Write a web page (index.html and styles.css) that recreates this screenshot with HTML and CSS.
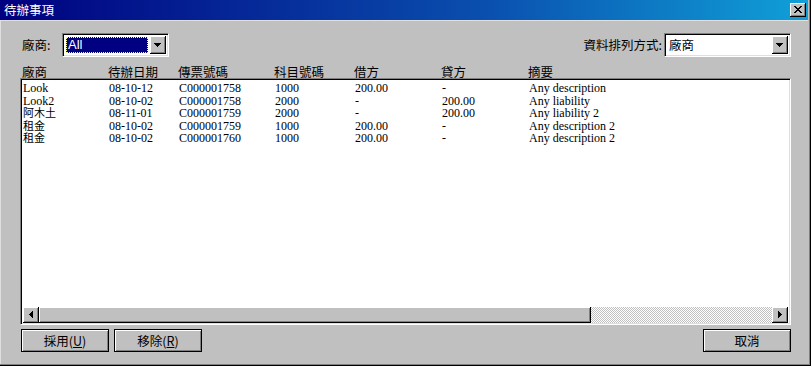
FILE: index.html
```html
<!DOCTYPE html>
<html>
<head>
<meta charset="utf-8">
<link rel="stylesheet" href="styles.css">
</head>
<body>
<div class="window">
  <div class="titlebar">
    <span class="title">待辦事項</span>
    <div class="close">
      <svg width="8" height="7" viewBox="0 0 8 7"><path d="M0 0h2v1H0zM6 0h2v1H6zM1 1h2v1H1zM5 1h2v1H5zM2 2h4v1H2zM3 3h2v1H3zM2 4h4v1H2zM1 5h2v1H1zM5 5h2v1H5zM0 6h2v1H0zM6 6h2v1H6z" fill="#000"/></svg>
    </div>
  </div>
  <div class="body">
    <div class="filters">
      <div class="field-group">
        <span class="label label-vendor">廠商:</span>
        <div class="combo combo-vendor">
          <div class="combo-value"><span class="selected">All</span></div>
          <div class="combo-btn"><svg width="7" height="4" viewBox="0 0 7 4"><path d="M0 0h7v1H0zM1 1h5v1H1zM2 2h3v1H2zM3 3h1v1H3z" fill="#000"/></svg></div>
        </div>
      </div>
      <div class="field-group">
        <span class="label">資料排列方式:</span>
        <div class="combo combo-sort">
          <div class="combo-value"><span class="plain">廠商</span></div>
          <div class="combo-btn"><svg width="7" height="4" viewBox="0 0 7 4"><path d="M0 0h7v1H0zM1 1h5v1H1zM2 2h3v1H2zM3 3h1v1H3z" fill="#000"/></svg></div>
        </div>
      </div>
    </div>
    <div class="cols header">
      <span>廠商</span><span>待辦日期</span><span>傳票號碼</span><span>科目號碼</span><span>借方</span><span>貸方</span><span>摘要</span>
    </div>
    <div class="list">
      <div class="rows">
        <div class="cols row"><span>Look</span><span>08-10-12</span><span>C000001758</span><span>1000</span><span>200.00</span><span>-</span><span>Any description</span></div>
        <div class="cols row"><span>Look2</span><span>08-10-02</span><span>C000001758</span><span>2000</span><span>-</span><span>200.00</span><span>Any liability</span></div>
        <div class="cols row"><span class="cjk">阿木土</span><span>08-11-01</span><span>C000001759</span><span>2000</span><span>-</span><span>200.00</span><span>Any liability 2</span></div>
        <div class="cols row"><span class="cjk">租金</span><span>08-10-02</span><span>C000001759</span><span>1000</span><span>200.00</span><span>-</span><span>Any description 2</span></div>
        <div class="cols row"><span class="cjk">租金</span><span>08-10-02</span><span>C000001760</span><span>1000</span><span>200.00</span><span>-</span><span>Any description 2</span></div>
      </div>
      <div class="hscroll">
        <div class="sb-btn"><svg width="4" height="7" viewBox="0 0 4 7"><path d="M3 0h1v7H3zM2 1h1v5H2zM1 2h1v3H1zM0 3h1v1H0z" fill="#000"/></svg></div>
        <div class="thumb"></div>
        <div class="track"></div>
        <div class="sb-btn"><svg width="4" height="7" viewBox="0 0 4 7"><path d="M0 0h1v7H0zM1 1h1v5H1zM2 2h1v3H2zM3 3h1v1H3z" fill="#000"/></svg></div>
      </div>
    </div>
    <div class="actions">
      <div class="btn-group">
        <div class="btn">採用(<u>U</u>)</div>
        <div class="btn">移除(<u>R</u>)</div>
      </div>
      <div class="btn">取消</div>
    </div>
  </div>
</div>
</body>
</html>
```

FILE: styles.css
```css
html, body {
  margin: 0;
  padding: 0;
  background: #c0c0c0;
}

.window {
  width: 811px;
  height: 366px;
  box-sizing: border-box;
  background: #c0c0c0;
  border-right: 1px solid #000;
  border-bottom: 1px solid #000;
  padding: 0 2px 2px 0;
  box-shadow: inset -1px -1px #808080, inset 1px 0 #dfdfdf;
  font-family: "Noto Sans CJK TC", "Liberation Sans", sans-serif;
  font-size: 12px;
  color: #000;
  display: flex;
  flex-direction: column;
}

.titlebar {
  height: 20px;
  flex: none;
  display: flex;
  align-items: center;
  justify-content: space-between;
  background: linear-gradient(90deg, #000080 0%, #0a4fae 60%, #10a0d8 100%);
  border-bottom: 1px solid #dfdfdf;
}

.title {
  color: #fff;
  font-size: 12.5px;
  line-height: 14px;
  padding-left: 4px;
}

.close {
  width: 16px;
  height: 14px;
  box-sizing: border-box;
  margin-right: 2px;
  background: #c0c0c0;
  border-right: 1px solid #000;
  border-bottom: 1px solid #000;
  box-shadow: inset 1px 1px #fff, inset -1px -1px #808080;
  display: flex;
  align-items: center;
  justify-content: center;
}

.body {
  flex: 1;
  display: flex;
  flex-direction: column;
  padding: 12px 17px 0 20px;
}

.filters {
  display: flex;
  justify-content: space-between;
  align-items: center;
  height: 24px;
}

.field-group {
  display: flex;
  align-items: center;
}

.label {
  font-size: 12.5px;
  line-height: 14px;
  margin-right: 2px;
}

.label-vendor {
  width: 38px;
  margin-left: 2px;
}

.combo {
  height: 24px;
  box-sizing: border-box;
  display: flex;
  background: #fff;
  border-top: 1px solid #808080;
  border-left: 1px solid #808080;
  border-right: 1px solid #fff;
  border-bottom: 1px solid #fff;
  box-shadow: inset 1px 1px #000, inset -1px -1px #dfdfdf;
  padding: 2px;
}

.combo-vendor { width: 107px; }
.combo-sort { width: 127px; }

.combo-value {
  flex: 1;
  display: flex;
  align-items: stretch;
  padding: 1px 2px 1px 1px;
}

.selected {
  flex: 1;
  background: #000080;
  color: #fff;
  outline: 1px dotted #ffff80;
  outline-offset: -1px;
  font-family: "Liberation Sans", sans-serif;
  font-size: 13px;
  line-height: 16px;
  padding-left: 2px;
}

.plain {
  font-size: 12.5px;
  line-height: 16px;
  padding-left: 1px;
}

.combo-btn {
  width: 16px;
  box-sizing: border-box;
  background: #c0c0c0;
  border-right: 1px solid #000;
  border-bottom: 1px solid #000;
  box-shadow: inset 1px 1px #fff, inset -1px -1px #808080;
  display: flex;
  align-items: center;
  justify-content: center;
}

.cols {
  display: grid;
  grid-template-columns: 86px 70px 96px 80px 87px 87px 1fr;
}

.header {
  margin-top: 8px;
  padding-left: 2px;
  height: 13px;
  font-size: 12.5px;
  line-height: 13px;
}

.list {
  height: 247px;
  box-sizing: border-box;
  background: #fff;
  border-top: 1px solid #808080;
  border-left: 1px solid #808080;
  border-right: 1px solid #fff;
  border-bottom: 1px solid #fff;
  box-shadow: inset 1px 1px #000, inset -1px -1px #dfdfdf;
  padding: 2px 2px 1px 2px;
  display: flex;
  flex-direction: column;
}

.rows {
  flex: 1;
  padding-top: 1px;
}

.row {
  font-family: "Liberation Serif", "Noto Sans CJK TC", serif;
  font-size: 12px;
  line-height: 12.5px;
  height: 12.5px;
  white-space: nowrap;
}

.cjk {
  font-size: 11px;
}

.hscroll {
  height: 16px;
  display: flex;
}

.sb-btn {
  width: 16px;
  flex: none;
  box-sizing: border-box;
  background: #c0c0c0;
  border-right: 1px solid #000;
  border-bottom: 1px solid #000;
  box-shadow: inset 1px 1px #fff, inset -1px -1px #808080;
  display: flex;
  align-items: center;
  justify-content: center;
}

.thumb {
  width: 552px;
  flex: none;
  box-sizing: border-box;
  background: #c0c0c0;
  border-right: 1px solid #000;
  border-bottom: 1px solid #000;
  box-shadow: inset 1px 1px #fff, inset -1px -1px #808080;
}

.track {
  flex: 1;
  background: repeating-conic-gradient(#fff 0 25%, #c0c0c0 0 50%) 0 0 / 2px 2px;
}

.actions {
  margin-top: 4px;
  display: flex;
  justify-content: space-between;
  padding-left: 1px;
}

.btn-group {
  display: flex;
  gap: 5px;
}

.btn {
  width: 88px;
  height: 23px;
  box-sizing: border-box;
  background: #c0c0c0;
  border: 1px solid #000;
  box-shadow: inset 1px 1px #fff, inset -1px -1px #808080;
  display: flex;
  align-items: center;
  justify-content: center;
  font-size: 12.5px;
  line-height: 14px;
}

.btn u {
  text-underline-offset: 1px;
}
```
